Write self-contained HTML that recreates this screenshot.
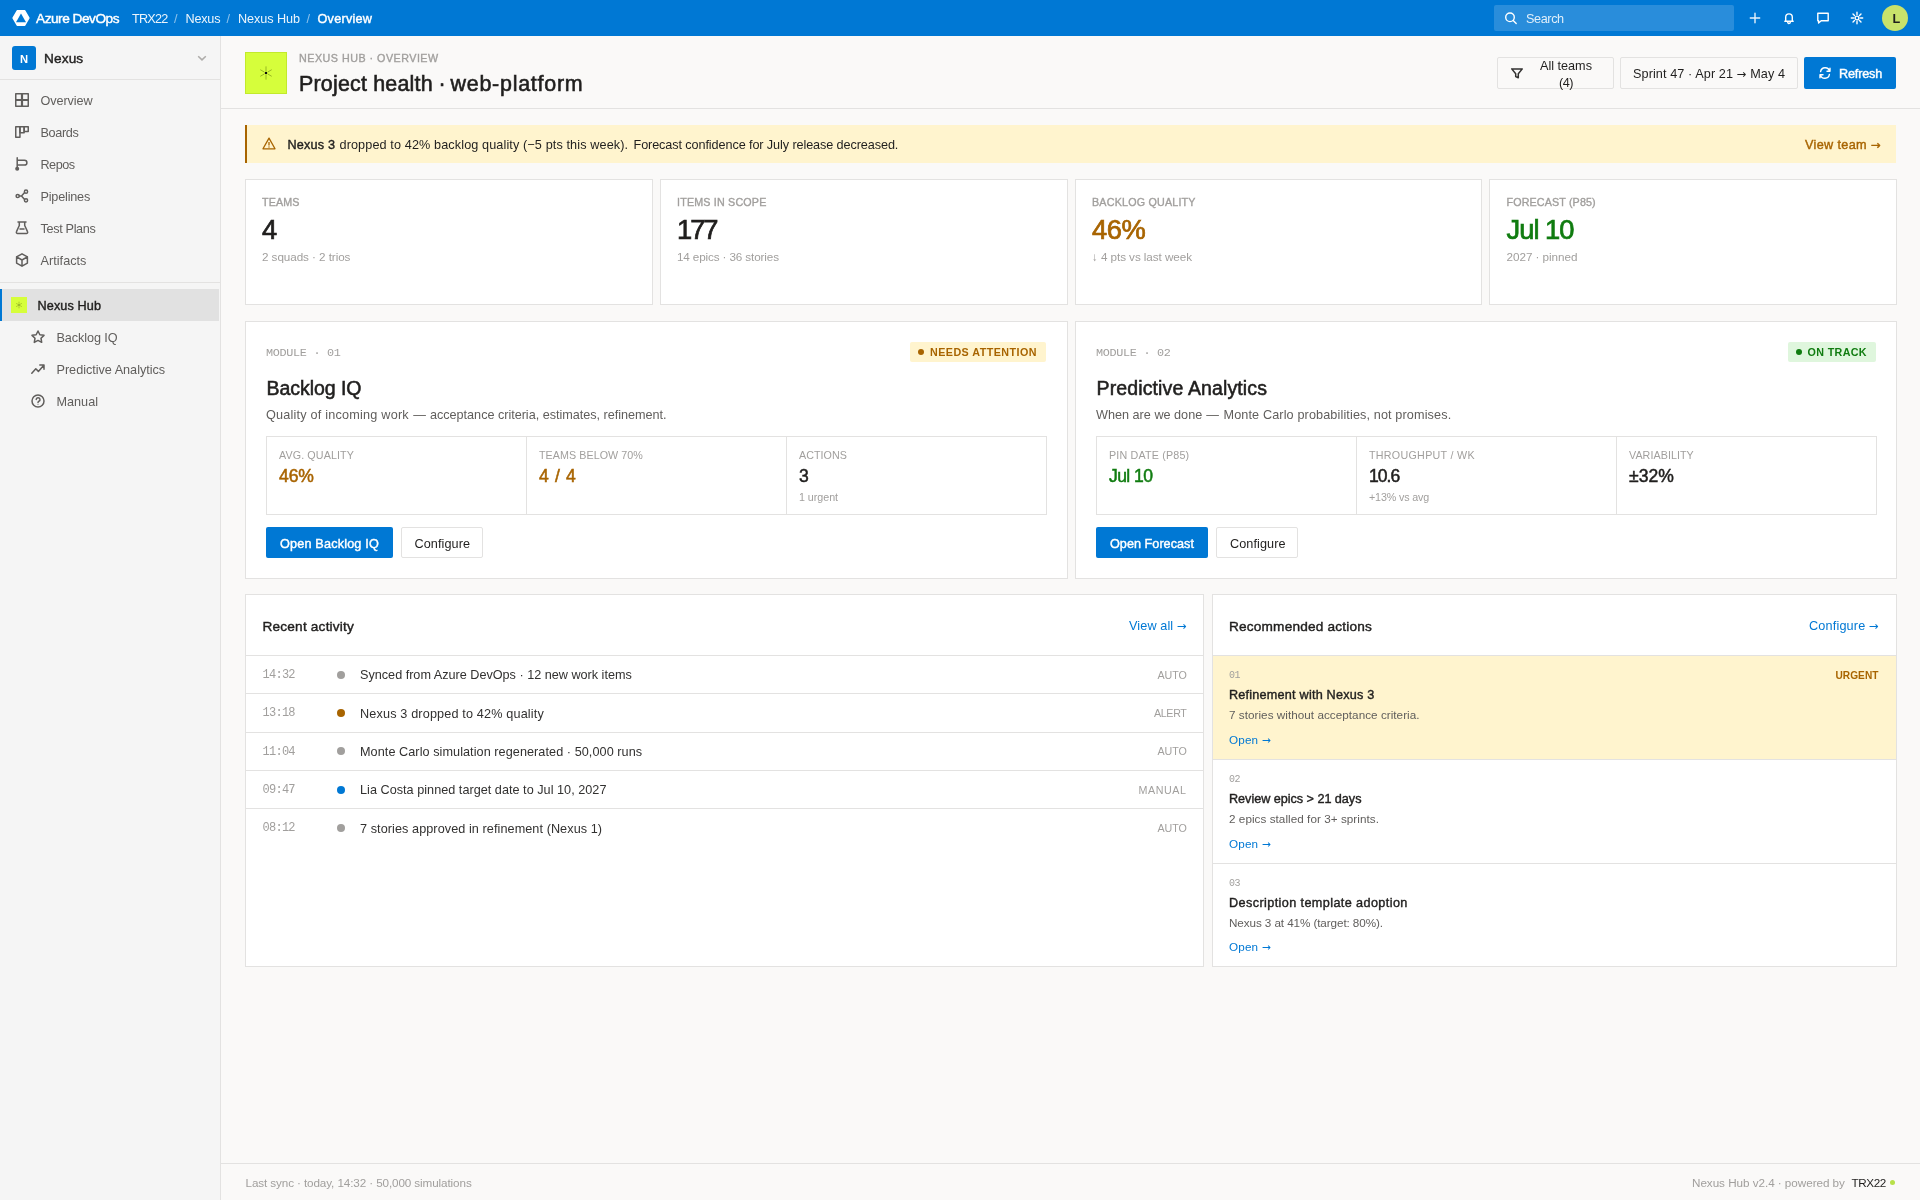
<!DOCTYPE html>
<html lang="en">
<head>
<meta charset="utf-8">
<title>Nexus Hub · Overview</title>
<style>
*{box-sizing:border-box;margin:0;padding:0}
html,body{width:1920px;height:1200px;overflow:hidden}
body{font-family:"Liberation Sans",sans-serif;font-size:13px;color:#201f1e;background:#faf9f8;position:relative}
.t{position:absolute;white-space:nowrap;line-height:1;display:block}
.t b{font-weight:400;-webkit-text-stroke:.4px}
.t i{font-style:normal;font-family:"DejaVu Sans",sans-serif;font-size:.92em}
#txt{position:absolute;left:0;top:0;width:1920px;height:1200px;will-change:transform}
.b{position:absolute;display:block}
.card{position:absolute;background:#fff;border:1px solid #e3e2e1}
.hl{position:absolute;height:1px;background:#e3e2e1}
.vl{position:absolute;width:1px;background:#e3e2e1}
.dot{position:absolute;width:8px;height:8px;border-radius:50%;background:#a19f9d}
svg{position:absolute;overflow:visible}
.ic{fill:none;stroke:#605e5c;stroke-width:1.5;stroke-linecap:round;stroke-linejoin:round}
.iw{fill:none;stroke:#fff;stroke-width:1.4;stroke-linecap:round;stroke-linejoin:round}
</style>
</head>
<body>
<!-- top bar -->
<div class="b" id="top" style="left:0;top:0;width:1920px;height:36px;background:#0078d4"></div>
<svg id="logo" style="left:12px;top:10px" width="18" height="16" viewBox="0 0 18 16"><path d="M5.2 0.8h7.6l4.2 7.2-4.2 7.2H5.2L1 8z" fill="#fff" stroke="#fff" stroke-width="1.4" stroke-linejoin="round"/><path d="M9 3.5l5 8.8H4z" fill="#0078d4"/></svg>
<div class="b" id="search" style="left:1494px;top:5px;width:240px;height:26px;border-radius:2px;background:rgba(255,255,255,.16)"></div>
<svg style="left:1504px;top:11px" width="14" height="14" viewBox="0 0 14 14" class="iw"><circle cx="6" cy="6.3" r="4.3"/><path d="M9.2 9.6l3 3"/></svg>
<svg style="left:1748px;top:11px;opacity:.9" width="14" height="14" viewBox="0 0 14 14" class="iw"><path d="M7 2.3v9.4M2.3 7h9.4"/></svg>
<svg style="left:1782px;top:11px" width="14" height="14" viewBox="0 0 14 14" class="iw"><path d="M3.7 10.2V6.2a3.3 3.3 0 0 1 6.6 0v4M2.8 10.3h8.4M5.9 10.6a1.2 1.2 0 0 0 2.2 1.2 1.2 1.2 0 0 0 0-1.2"/></svg>
<svg style="left:1816px;top:11px" width="14" height="14" viewBox="0 0 14 14" class="iw"><path d="M1.8 2.3h10.4v7.4H5.2L2.6 12V9.7H1.8z"/></svg>
<svg style="left:1850px;top:11px" width="14" height="14" viewBox="0 0 14 14" class="iw"><circle cx="7" cy="7" r="1.9"/><path d="M7 1.3v2.2M7 10.5v2.2M1.3 7h2.2M10.5 7h2.2M3 3l1.5 1.5M9.5 9.5L11 11M3 11l1.5-1.5M9.5 4.5L11 3"/></svg>
<div class="b" id="avatar" style="left:1882px;top:5px;width:26px;height:26px;border-radius:50%;background:#c8e26b"></div>

<!-- sidebar -->
<div class="b" id="side" style="left:0;top:36px;width:220px;height:1164px;background:#f5f5f5"></div>
<div class="vl" style="left:220px;top:36px;height:1164px"></div>
<div class="b" style="left:12px;top:46px;width:24px;height:24px;border-radius:3px;background:#0078d4"></div>
<svg style="left:197px;top:55px" width="10" height="6" viewBox="0 0 10 6"><path d="M1.2 1.2l3.8 3.7 3.8-3.7" fill="none" stroke="#aeacaa" stroke-width="1.5"/></svg>
<div class="hl" style="left:0;top:79px;width:220px"></div>
<!-- nav icons -->
<svg style="left:15px;top:93px" width="14" height="14" viewBox="0 0 14 14" class="ic"><rect x=".75" y=".75" width="5.9" height="5.9"/><rect x="7.35" y=".75" width="5.9" height="5.9"/><rect x=".75" y="7.35" width="5.9" height="5.9"/><rect x="7.35" y="7.35" width="5.9" height="5.9"/></svg>
<svg style="left:15px;top:126px" width="14" height="12" viewBox="0 0 14 12" class="ic"><rect x=".75" y=".75" width="4.2" height="10.5"/><rect x="4.95" y=".75" width="4.2" height="6"/><rect x="9.15" y=".75" width="4.1" height="4.8"/></svg>
<svg style="left:15px;top:157px" width="14" height="14" viewBox="0 0 14 14" class="ic"><path d="M2.2 0.8v9.5M2.2 3.3h7.3a2.4 2.4 0 0 1 0 4.8H2.2"/><circle cx="2.2" cy="11.8" r="1.3" fill="#605e5c"/></svg>
<svg style="left:15px;top:189px" width="14" height="14" viewBox="0 0 14 14" class="ic"><circle cx="2.7" cy="7" r="1.6"/><circle cx="11" cy="2.7" r="1.6"/><circle cx="11" cy="11.3" r="1.6"/><path d="M4.3 7H6.5L9.6 3.6M6.5 7l3.1 3.4"/></svg>
<svg style="left:15px;top:221px" width="14" height="14" viewBox="0 0 14 14" class="ic"><path d="M3 .9h8M4.3 .9v3.6L1.5 10.6a1.2 1.2 0 0 0 1.1 1.8h8.8a1.2 1.2 0 0 0 1.1-1.8L9.7 4.5V.9M5 8h4"/></svg>
<svg style="left:15px;top:253px" width="14" height="14" viewBox="0 0 14 14" class="ic"><path d="M7 .8l5.4 3.1v6.2L7 13.2 1.6 10.1V3.9zM1.6 3.9L7 7l5.4-3.1M7 7v6.2"/></svg>
<div class="hl" style="left:0;top:282px;width:220px"></div>
<div class="b" style="left:0;top:289px;width:219px;height:32px;background:#e1e1e1"></div>
<div class="b" style="left:0;top:289px;width:2px;height:32px;background:#0078d4"></div>
<div class="b" style="left:11px;top:297px;width:16px;height:16px;background:#d6fe3b"></div>
<svg style="left:15px;top:301px" width="8" height="8" viewBox="0 0 8 8"><path d="M4.00 2.80L4.00 0.70M5.04 3.40L6.86 2.35M2.96 3.40L1.14 2.35M2.96 4.60L1.14 5.65M4.00 5.20L4.00 7.30M5.04 4.60L6.86 5.65" stroke="rgba(70,90,0,.5)" stroke-width="0.6" fill="none"/><circle cx="4" cy="4" r=".75" fill="#4a5a14"/></svg>
<svg style="left:31px;top:330px" width="14" height="14" viewBox="0 0 14 14" class="ic"><path d="M7 1l1.85 3.75 4.15.6-3 2.9.7 4.1L7 10.4l-3.7 1.95.7-4.1-3-2.9 4.15-.6z"/></svg>
<svg style="left:31px;top:362px" width="14" height="14" viewBox="0 0 14 14" class="ic"><path d="M.8 11.2l4-4.4 2.6 2.6 5.4-6.2M8.8 3h4.2v4.2"/></svg>
<svg style="left:31px;top:394px" width="14" height="14" viewBox="0 0 14 14" class="ic"><circle cx="7" cy="7" r="6"/><path d="M5.2 5.4a1.9 1.9 0 1 1 2.6 1.9c-.5.3-.8.6-.8 1.2"/><circle cx="7" cy="10.3" r=".5" fill="#605e5c" stroke="none"/></svg>

<!-- header -->
<div class="hl" style="left:221px;top:108px;width:1699px"></div>
<div class="b" style="left:245px;top:52px;width:42px;height:42px;background:#d6fe3b;border:1px solid #c2ea2c"></div>
<svg style="left:259px;top:66px" width="14" height="14" viewBox="0 0 14 14"><path d="M7.00 5.00L7.00 0.40M8.73 6.00L12.72 3.70M5.27 6.00L1.28 3.70M5.27 8.00L1.28 10.30M7.00 9.00L7.00 13.60M8.73 8.00L12.72 10.30" stroke="rgba(70,90,0,.42)" stroke-width="1" fill="none"/><circle cx="7" cy="7" r="1.25" fill="#0b0b0b"/></svg>
<div class="b" style="left:1497px;top:57px;width:117px;height:32px;border:1px solid #e3e2e1;border-radius:2px"></div>
<svg style="left:1510px;top:67px" width="14" height="13" viewBox="0 0 14 13"><path d="M1.7 1.9h10.6L8.3 6.8v4L5.7 9.6V6.8z" fill="none" stroke="#323130" stroke-width="1.5" stroke-linejoin="round"/></svg>
<div class="b" style="left:1620px;top:57px;width:178px;height:32px;border:1px solid #e3e2e1;border-radius:2px"></div>
<div class="b" style="left:1804px;top:57px;width:92px;height:32px;background:#0078d4;border-radius:2px"></div>
<svg style="left:1819px;top:67px" width="12" height="12" viewBox="0 0 12 12" class="iw"><path d="M11 1.2v3H8M1 10.8v-3h3M1.6 4.6A4.6 4.6 0 0 1 10.6 4.2M10.4 7.4A4.6 4.6 0 0 1 1.4 7.8"/></svg>

<!-- banner -->
<div class="b" style="left:245px;top:125px;width:1651px;height:38px;background:#fff4ce"></div>
<div class="b" style="left:245px;top:125px;width:2px;height:38px;background:#a86400"></div>
<svg style="left:262px;top:137px" width="14" height="13" viewBox="0 0 14 13"><path d="M7 1.1l6 10.7H1z" fill="none" stroke="#a86400" stroke-width="1.3" stroke-linejoin="round"/><path d="M7 5v3.4" stroke="#a86400" stroke-width="1.3"/><circle cx="7" cy="10" r=".7" fill="#a86400"/></svg>

<!-- KPI cards -->
<div class="card" style="left:245px;top:179px;width:407.75px;height:126px"></div>
<div class="card" style="left:659.75px;top:179px;width:407.75px;height:126px"></div>
<div class="card" style="left:1074.5px;top:179px;width:407.75px;height:126px"></div>
<div class="card" style="left:1489.25px;top:179px;width:407.75px;height:126px"></div>

<!-- module cards -->
<div class="card" style="left:245px;top:321px;width:822.5px;height:258px"></div>
<div class="card" style="left:1074.5px;top:321px;width:822.5px;height:258px"></div>
<div class="b" style="left:910px;top:342px;width:136px;height:20px;border-radius:2px;background:#fff4ce"></div>
<div class="b" style="left:918px;top:349px;width:6px;height:6px;border-radius:50%;background:#a86400"></div>
<div class="b" style="left:1788px;top:342px;width:88px;height:20px;border-radius:2px;background:#dff6dd"></div>
<div class="b" style="left:1796px;top:349px;width:6px;height:6px;border-radius:50%;background:#107c10"></div>
<div class="card" style="left:266px;top:436px;width:781px;height:79px"></div>
<div class="vl" style="left:526px;top:437px;height:77px"></div>
<div class="vl" style="left:786px;top:437px;height:77px"></div>
<div class="card" style="left:1096px;top:436px;width:781px;height:79px"></div>
<div class="vl" style="left:1356px;top:437px;height:77px"></div>
<div class="vl" style="left:1616px;top:437px;height:77px"></div>
<div class="b" style="left:266px;top:527px;width:127px;height:31px;background:#0078d4;border-radius:2px"></div>
<div class="b" style="left:401px;top:527px;width:82px;height:31px;border:1px solid #e3e2e1;border-radius:2px;background:#fff"></div>
<div class="b" style="left:1096px;top:527px;width:112px;height:31px;background:#0078d4;border-radius:2px"></div>
<div class="b" style="left:1216px;top:527px;width:82px;height:31px;border:1px solid #e3e2e1;border-radius:2px;background:#fff"></div>

<!-- recent activity -->
<div class="card" style="left:245px;top:594px;width:959px;height:373px"></div>
<div class="hl" style="left:246px;top:655px;width:957px"></div>
<div class="hl" style="left:246px;top:693px;width:957px"></div>
<div class="hl" style="left:246px;top:732px;width:957px"></div>
<div class="hl" style="left:246px;top:770px;width:957px"></div>
<div class="hl" style="left:246px;top:808px;width:957px"></div>
<div class="dot" style="left:337px;top:671px"></div>
<div class="dot" style="left:337px;top:709px;background:#a86400"></div>
<div class="dot" style="left:337px;top:747px"></div>
<div class="dot" style="left:337px;top:786px;background:#0078d4"></div>
<div class="dot" style="left:337px;top:824px"></div>

<!-- recommended actions -->
<div class="card" style="left:1212px;top:594px;width:685px;height:373px"></div>
<div class="b" style="left:1213px;top:656px;width:683px;height:103px;background:#fff4ce"></div>
<div class="hl" style="left:1213px;top:655px;width:683px"></div>
<div class="hl" style="left:1213px;top:759px;width:683px"></div>
<div class="hl" style="left:1213px;top:863px;width:683px"></div>

<!-- footer -->
<div class="hl" style="left:221px;top:1163px;width:1699px"></div>
<div class="b" style="left:1890px;top:1180px;width:5px;height:5px;border-radius:50%;background:#b8e04a"></div>

<div id="txt">
<span class="t" id="az" style="left:36px;top:12px;font-size:13.65px;color:#fff;-webkit-text-stroke:0.42px;letter-spacing:-0.47px;">Azure DevOps</span>
<span class="t" id="bc1" style="left:132px;top:13px;font-size:12.675px;color:rgba(255,255,255,.92);letter-spacing:-0.78px;">TRX22</span>
<span class="t" id="bs1" style="left:174px;top:13px;font-size:12.675px;color:rgba(255,255,255,.55);letter-spacing:1.47px;">/</span>
<span class="t" id="bc2" style="left:185.5px;top:13px;font-size:12.675px;color:rgba(255,255,255,.92);letter-spacing:-0.23px;">Nexus</span>
<span class="t" id="bs2" style="left:226.5px;top:13px;font-size:12.675px;color:rgba(255,255,255,.55);letter-spacing:1.47px;">/</span>
<span class="t" id="bc3" style="left:238px;top:13px;font-size:12.675px;color:rgba(255,255,255,.92);letter-spacing:-0.07px;">Nexus Hub</span>
<span class="t" id="bs3" style="left:306.5px;top:13px;font-size:12.675px;color:rgba(255,255,255,.55);letter-spacing:1.47px;">/</span>
<span class="t" id="bc4" style="left:317.5px;top:13px;font-size:12.675px;color:#fff;-webkit-text-stroke:0.40px;letter-spacing:0.24px;">Overview</span>
<span class="t" id="srch" style="left:1526px;top:13px;font-size:12.675px;color:rgba(255,255,255,.85);letter-spacing:-0.39px;">Search</span>
<span class="t" id="avL" style="left:1892.5px;top:13px;font-size:12.675px;color:#201f1e;font-weight:700;letter-spacing:-1.73px;">L</span>
<span class="t" id="projN" style="left:20px;top:53.6px;font-size:11.2125px;color:#fff;font-weight:700;letter-spacing:0.91px;">N</span>
<span class="t" id="proj" style="left:44px;top:52px;font-size:13.65px;color:#201f1e;-webkit-text-stroke:0.42px;letter-spacing:0.13px;">Nexus</span>
<span class="t" id="nav0" style="left:40.5px;top:95px;font-size:12.675px;color:#605e5c;letter-spacing:-0.09px;">Overview</span>
<span class="t" id="nav1" style="left:40.5px;top:127px;font-size:12.675px;color:#605e5c;letter-spacing:-0.35px;">Boards</span>
<span class="t" id="nav2" style="left:40.5px;top:159px;font-size:12.675px;color:#605e5c;letter-spacing:-0.52px;">Repos</span>
<span class="t" id="nav3" style="left:40.5px;top:191px;font-size:12.675px;color:#605e5c;letter-spacing:-0.20px;">Pipelines</span>
<span class="t" id="nav4" style="left:40.5px;top:223px;font-size:12.675px;color:#605e5c;letter-spacing:-0.34px;">Test Plans</span>
<span class="t" id="nav5" style="left:40.5px;top:255px;font-size:12.675px;color:#605e5c;letter-spacing:0.03px;">Artifacts</span>
<span class="t" id="hub" style="left:37.5px;top:300px;font-size:12.675px;color:#201f1e;-webkit-text-stroke:0.40px;letter-spacing:0.12px;">Nexus Hub</span>
<span class="t" id="sub0" style="left:56.5px;top:332px;font-size:12.675px;color:#605e5c;letter-spacing:-0.09px;">Backlog IQ</span>
<span class="t" id="sub1" style="left:56.5px;top:364px;font-size:12.675px;color:#605e5c;letter-spacing:-0.02px;">Predictive Analytics</span>
<span class="t" id="sub2" style="left:56.5px;top:396px;font-size:12.675px;color:#605e5c;">Manual</span>
<span class="t" id="eyebrow" style="left:299px;top:53px;font-size:10.725px;color:#a19f9d;-webkit-text-stroke:0.36px;letter-spacing:0.50px;">NEXUS HUB · OVERVIEW</span>
<span class="t" id="title_0" style="left:299px;top:73.6px;font-size:21.45px;color:#201f1e;-webkit-text-stroke:0.59px;letter-spacing:0.19px;">Project health</span>
<span class="t" id="title_1" style="left:427px;top:73.6px;font-size:21.45px;color:#201f1e;-webkit-text-stroke:0.59px;width:30px;text-align:center;">·</span>
<span class="t" id="title_2" style="left:450.5px;top:73.6px;font-size:21.45px;color:#201f1e;-webkit-text-stroke:0.59px;letter-spacing:0.75px;">web-platform</span>
<span class="t" id="ft1" style="left:1540px;top:60px;font-size:12.675px;color:#201f1e;letter-spacing:-0.01px;">All teams</span>
<span class="t" id="ft2" style="left:1559px;top:76.5px;font-size:12.675px;color:#201f1e;letter-spacing:-0.49px;">(4)</span>
<span class="t" id="sprint" style="left:1633px;top:67.7px;font-size:12.675px;color:#201f1e;letter-spacing:0.09px;">Sprint 47 · Apr 21 <i>→</i> May 4</span>
<span class="t" id="refresh" style="left:1839px;top:67.8px;font-size:12.675px;color:#fff;-webkit-text-stroke:0.40px;letter-spacing:-0.19px;">Refresh</span>
<span class="t" id="ban_0" style="left:287.5px;top:138.5px;font-size:12.675px;color:#201f1e;-webkit-text-stroke:0.40px;letter-spacing:0.18px;">Nexus 3</span>
<span class="t" id="ban_1" style="left:339.5px;top:138.5px;font-size:12.675px;color:#201f1e;letter-spacing:0.11px;">dropped to 42% backlog quality (−5 pts this week).</span>
<span class="t" id="ban_2" style="left:633.5px;top:138.5px;font-size:12.675px;color:#201f1e;letter-spacing:-0.10px;">Forecast confidence for July release decreased.</span>
<span class="t" id="vteam" style="left:1805px;top:138.5px;font-size:12.675px;color:#a86400;-webkit-text-stroke:0.40px;letter-spacing:0.35px;">View team <i>→</i></span>
<span class="t" id="k0l" style="left:262px;top:197px;font-size:10.725px;color:#a19f9d;-webkit-text-stroke:0.36px;letter-spacing:0.11px;">TEAMS</span>
<span class="t" id="k0v" style="left:262px;top:216px;font-size:27.3px;color:#201f1e;-webkit-text-stroke:0.72px;letter-spacing:0.41px;">4</span>
<span class="t" id="k0s" style="left:262px;top:251px;font-size:11.7px;color:#a19f9d;letter-spacing:-0.07px;">2 squads · 2 trios</span>
<span class="t" id="k1l" style="left:677px;top:197px;font-size:10.725px;color:#a19f9d;-webkit-text-stroke:0.36px;letter-spacing:0.18px;">ITEMS IN SCOPE</span>
<span class="t" id="k1v" style="left:677px;top:216px;font-size:27.3px;color:#201f1e;-webkit-text-stroke:0.72px;letter-spacing:-2.02px;">177</span>
<span class="t" id="k1s" style="left:677px;top:251px;font-size:11.7px;color:#a19f9d;letter-spacing:-0.13px;">14 epics · 36 stories</span>
<span class="t" id="k2l" style="left:1092px;top:197px;font-size:10.725px;color:#a19f9d;-webkit-text-stroke:0.36px;letter-spacing:0.20px;">BACKLOG QUALITY</span>
<span class="t" id="k2v" style="left:1092px;top:216px;font-size:27.3px;color:#a86400;-webkit-text-stroke:0.72px;letter-spacing:-0.45px;">46%</span>
<span class="t" id="k2s" style="left:1092px;top:251px;font-size:11.7px;color:#a19f9d;letter-spacing:-0.07px;">↓ 4 pts vs last week</span>
<span class="t" id="k3l" style="left:1506.5px;top:197px;font-size:10.725px;color:#a19f9d;-webkit-text-stroke:0.36px;letter-spacing:0.14px;">FORECAST (P85)</span>
<span class="t" id="k3v" style="left:1506.5px;top:216px;font-size:27.3px;color:#107c10;-webkit-text-stroke:0.72px;letter-spacing:-0.97px;">Jul 10</span>
<span class="t" id="k3s" style="left:1506.5px;top:251px;font-size:11.7px;color:#a19f9d;letter-spacing:-0.04px;">2027 · pinned</span>
<span class="t" id="m0n" style="left:266px;top:347.8px;font-size:11.8px;color:#a19f9d;font-family:'Liberation Mono',monospace;letter-spacing:-0.31px;">MODULE · 01</span>
<span class="t" id="m0t" style="left:266.5px;top:379px;font-size:19.5px;color:#201f1e;-webkit-text-stroke:0.55px;letter-spacing:-0.04px;">Backlog IQ</span>
<span class="t" id="m0d_0" style="left:266px;top:408.7px;font-size:12.675px;color:#605e5c;letter-spacing:0.21px;">Quality of incoming work</span>
<span class="t" id="m0d_1" style="left:404.5px;top:408.7px;font-size:12.675px;color:#605e5c;width:30px;text-align:center;">—</span>
<span class="t" id="m0d_2" style="left:430px;top:408.7px;font-size:12.675px;color:#605e5c;letter-spacing:-0.03px;">acceptance criteria, estimates, refinement.</span>
<span class="t" id="m1n" style="left:1096px;top:347.8px;font-size:11.8px;color:#a19f9d;font-family:'Liberation Mono',monospace;letter-spacing:-0.31px;">MODULE · 02</span>
<span class="t" id="m1t" style="left:1096.5px;top:379px;font-size:19.5px;color:#201f1e;-webkit-text-stroke:0.55px;letter-spacing:0.13px;">Predictive Analytics</span>
<span class="t" id="m1d_0" style="left:1096px;top:408.7px;font-size:12.675px;color:#605e5c;">When are we done</span>
<span class="t" id="m1d_1" style="left:1197.5px;top:408.7px;font-size:12.675px;color:#605e5c;width:30px;text-align:center;">—</span>
<span class="t" id="m1d_2" style="left:1223.5px;top:408.7px;font-size:12.675px;color:#605e5c;letter-spacing:0.12px;">Monte Carlo probabilities, not promises.</span>
<span class="t" id="pill0" style="left:930px;top:346.8px;font-size:10.725px;color:#a86400;font-weight:700;letter-spacing:0.46px;">NEEDS ATTENTION</span>
<span class="t" id="pill1" style="left:1807.5px;top:346.8px;font-size:10.725px;color:#107c10;font-weight:700;letter-spacing:0.36px;">ON TRACK</span>
<span class="t" id="s00l" style="left:279px;top:450px;font-size:10.725px;color:#a19f9d;letter-spacing:0.11px;">AVG. QUALITY</span>
<span class="t" id="s00v" style="left:279px;top:467.8px;font-size:17.55px;color:#a86400;-webkit-text-stroke:0.51px;letter-spacing:-0.10px;">46%</span>
<span class="t" id="s01l" style="left:539px;top:450px;font-size:10.725px;color:#a19f9d;letter-spacing:0.06px;">TEAMS BELOW 70%</span>
<span class="t" id="s01v" style="left:539px;top:467.8px;font-size:17.55px;color:#a86400;-webkit-text-stroke:0.51px;letter-spacing:0.68px;">4 / 4</span>
<span class="t" id="s02l" style="left:799px;top:450px;font-size:10.725px;color:#a19f9d;letter-spacing:0.05px;">ACTIONS</span>
<span class="t" id="s02v" style="left:799px;top:467.8px;font-size:17.55px;color:#201f1e;-webkit-text-stroke:0.51px;letter-spacing:-0.77px;">3</span>
<span class="t" id="s02s" style="left:799px;top:491.6px;font-size:10.725px;color:#a19f9d;letter-spacing:-0.04px;">1 urgent</span>
<span class="t" id="s10l" style="left:1109px;top:450px;font-size:10.725px;color:#a19f9d;letter-spacing:0.18px;">PIN DATE (P85)</span>
<span class="t" id="s10v" style="left:1109px;top:467.8px;font-size:17.55px;color:#107c10;-webkit-text-stroke:0.51px;letter-spacing:-0.58px;">Jul 10</span>
<span class="t" id="s11l" style="left:1369px;top:450px;font-size:10.725px;color:#a19f9d;letter-spacing:0.28px;">THROUGHPUT / WK</span>
<span class="t" id="s11v" style="left:1369px;top:467.8px;font-size:17.55px;color:#201f1e;-webkit-text-stroke:0.51px;letter-spacing:-0.96px;">10.6</span>
<span class="t" id="s11s" style="left:1369px;top:491.6px;font-size:10.725px;color:#a19f9d;letter-spacing:-0.14px;">+13% vs avg</span>
<span class="t" id="s12l" style="left:1629px;top:450px;font-size:10.725px;color:#a19f9d;letter-spacing:0.06px;">VARIABILITY</span>
<span class="t" id="s12v" style="left:1629px;top:467.8px;font-size:17.55px;color:#201f1e;-webkit-text-stroke:0.51px;letter-spacing:0.07px;">±32%</span>
<span class="t" id="b0" style="left:280px;top:537.8px;font-size:12.675px;color:#fff;-webkit-text-stroke:0.40px;letter-spacing:0.17px;">Open Backlog IQ</span>
<span class="t" id="b0c" style="left:414.5px;top:537.8px;font-size:12.675px;color:#201f1e;letter-spacing:0.08px;">Configure</span>
<span class="t" id="b1" style="left:1110px;top:537.8px;font-size:12.675px;color:#fff;-webkit-text-stroke:0.40px;letter-spacing:0.02px;">Open Forecast</span>
<span class="t" id="b1c" style="left:1230px;top:537.8px;font-size:12.675px;color:#201f1e;letter-spacing:0.08px;">Configure</span>
<span class="t" id="rah" style="left:262.5px;top:620.3px;font-size:13.65px;color:#201f1e;-webkit-text-stroke:0.42px;letter-spacing:0.19px;">Recent activity</span>
<span class="t" id="raa" style="left:1129px;top:619.6px;font-size:12.675px;color:#0078d4;letter-spacing:0.11px;">View all <i>→</i></span>
<span class="t" id="r0t" style="left:262.5px;top:669px;font-size:12px;color:#a19f9d;font-family:'Liberation Mono',monospace;letter-spacing:-0.74px;">14:32</span>
<span class="t" id="r0x" style="left:360px;top:669px;font-size:12.675px;color:#323130;letter-spacing:-0.01px;">Synced from Azure DevOps · 12 new work items</span>
<span class="t" id="r0g" style="left:1157.5px;top:670px;font-size:10.725px;color:#a19f9d;letter-spacing:-0.05px;">AUTO</span>
<span class="t" id="r1t" style="left:262.5px;top:707px;font-size:12px;color:#a19f9d;font-family:'Liberation Mono',monospace;letter-spacing:-0.74px;">13:18</span>
<span class="t" id="r1x" style="left:360px;top:708px;font-size:12.675px;color:#323130;letter-spacing:0.15px;">Nexus 3 dropped to 42% quality</span>
<span class="t" id="r1g" style="left:1154px;top:708px;font-size:10.725px;color:#a19f9d;letter-spacing:-0.37px;">ALERT</span>
<span class="t" id="r2t" style="left:262.5px;top:746px;font-size:12px;color:#a19f9d;font-family:'Liberation Mono',monospace;letter-spacing:-0.74px;">11:04</span>
<span class="t" id="r2x" style="left:360px;top:746px;font-size:12.675px;color:#323130;letter-spacing:0.06px;">Monte Carlo simulation regenerated · 50,000 runs</span>
<span class="t" id="r2g" style="left:1157.5px;top:746px;font-size:10.725px;color:#a19f9d;letter-spacing:-0.05px;">AUTO</span>
<span class="t" id="r3t" style="left:262.5px;top:784px;font-size:12px;color:#a19f9d;font-family:'Liberation Mono',monospace;letter-spacing:-0.74px;">09:47</span>
<span class="t" id="r3x" style="left:360px;top:784px;font-size:12.675px;color:#323130;letter-spacing:0.02px;">Lia Costa pinned target date to Jul 10, 2027</span>
<span class="t" id="r3g" style="left:1138.5px;top:785px;font-size:10.725px;color:#a19f9d;letter-spacing:0.56px;">MANUAL</span>
<span class="t" id="r4t" style="left:262.5px;top:822px;font-size:12px;color:#a19f9d;font-family:'Liberation Mono',monospace;letter-spacing:-0.74px;">08:12</span>
<span class="t" id="r4x" style="left:360px;top:823px;font-size:12.675px;color:#323130;letter-spacing:0.07px;">7 stories approved in refinement (Nexus 1)</span>
<span class="t" id="r4g" style="left:1157.5px;top:823px;font-size:10.725px;color:#a19f9d;letter-spacing:-0.05px;">AUTO</span>
<span class="t" id="rch" style="left:1229px;top:620.3px;font-size:13.65px;color:#201f1e;-webkit-text-stroke:0.42px;letter-spacing:0.18px;">Recommended actions</span>
<span class="t" id="rca" style="left:1809px;top:619.6px;font-size:12.675px;color:#0078d4;letter-spacing:0.17px;">Configure <i>→</i></span>
<span class="t" id="urg" style="left:1835.5px;top:670.9px;font-size:10.14px;color:#a86400;font-weight:700;letter-spacing:0.04px;">URGENT</span>
<span class="t" id="i0n" style="left:1229px;top:671.3px;font-size:10px;color:#a19f9d;font-family:'Liberation Mono',monospace;letter-spacing:-0.41px;">01</span>
<span class="t" id="i0t" style="left:1229px;top:689.3px;font-size:12.675px;color:#201f1e;-webkit-text-stroke:0.40px;letter-spacing:0.21px;">Refinement with Nexus 3</span>
<span class="t" id="i0d" style="left:1229px;top:709.3px;font-size:11.7px;color:#605e5c;letter-spacing:0.04px;">7 stories without acceptance criteria.</span>
<span class="t" id="i0o" style="left:1229px;top:733.9px;font-size:11.7px;color:#0078d4;letter-spacing:0.16px;">Open <i>→</i></span>
<span class="t" id="i1n" style="left:1229px;top:775px;font-size:10px;color:#a19f9d;font-family:'Liberation Mono',monospace;letter-spacing:-0.41px;">02</span>
<span class="t" id="i1t" style="left:1229px;top:793px;font-size:12.675px;color:#201f1e;-webkit-text-stroke:0.40px;letter-spacing:-0.04px;">Review epics &gt; 21 days</span>
<span class="t" id="i1d" style="left:1229px;top:813px;font-size:11.7px;color:#605e5c;letter-spacing:0.05px;">2 epics stalled for 3+ sprints.</span>
<span class="t" id="i1o" style="left:1229px;top:837.6px;font-size:11.7px;color:#0078d4;letter-spacing:0.16px;">Open <i>→</i></span>
<span class="t" id="i2n" style="left:1229px;top:878.7px;font-size:10px;color:#a19f9d;font-family:'Liberation Mono',monospace;letter-spacing:-0.41px;">03</span>
<span class="t" id="i2t" style="left:1229px;top:896.7px;font-size:12.675px;color:#201f1e;-webkit-text-stroke:0.40px;letter-spacing:0.39px;">Description template adoption</span>
<span class="t" id="i2d" style="left:1229px;top:916.7px;font-size:11.7px;color:#605e5c;letter-spacing:-0.09px;">Nexus 3 at 41% (target: 80%).</span>
<span class="t" id="i2o" style="left:1229px;top:941.3px;font-size:11.7px;color:#0078d4;letter-spacing:0.16px;">Open <i>→</i></span>
<span class="t" id="f1" style="left:245.5px;top:1176.9px;font-size:11.7px;color:#a19f9d;letter-spacing:-0.11px;">Last sync · today, 14:32 · 50,000 simulations</span>
<span class="t" id="f2" style="left:1692px;top:1176.9px;font-size:11.7px;color:#a19f9d;letter-spacing:-0.04px;">Nexus Hub v2.4 · powered by</span>
<span class="t" id="f3" style="left:1851.5px;top:1176.9px;font-size:11.7px;color:#201f1e;letter-spacing:-0.38px;">TRX22</span>
</div>
</body>
</html>
